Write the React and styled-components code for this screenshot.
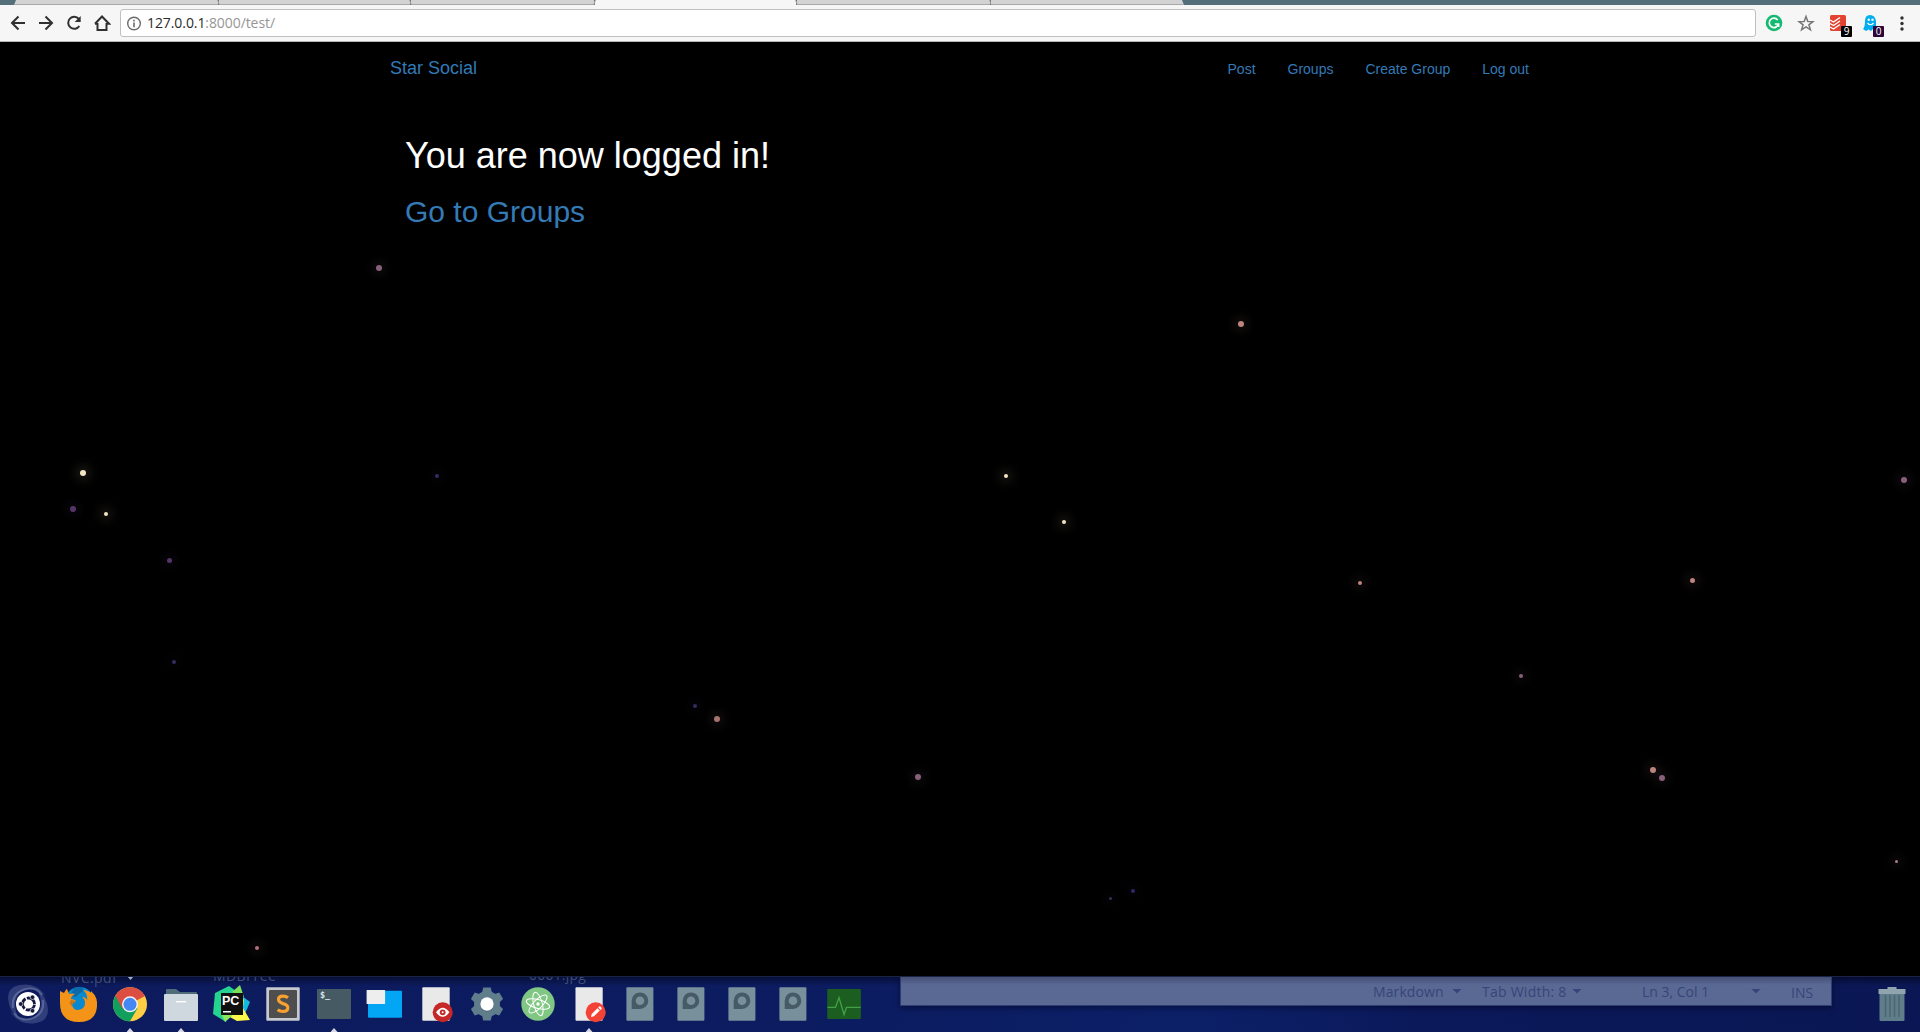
import React from "react";
import styled, { createGlobalStyle, css } from "styled-components";

const Global = createGlobalStyle`
  * { box-sizing: border-box; }
  html, body { margin: 0; background: #000; overflow: hidden; }
`;

const Screen = styled.div`
  width: 1920px;
  height: 1032px;
  display: flex;
  flex-direction: column;
  overflow: hidden;
  font-family: "Liberation Sans", Arial, sans-serif;
`;

/* ---------- browser chrome ---------- */

const TabStrip = styled.div`
  display: flex;
  height: 5px;
  padding-left: 14px;
  background: #546e7a;
  flex: none;
`;

const Tab = styled.div`
  width: ${(p) => p.$w}px;
  height: 5px;
  background: ${(p) => (p.$active ? "#f6f6f6" : "#d3d3d3")};
  border-bottom: 1px solid ${(p) => (p.$active ? "#f6f6f6" : "#a8a8a8")};
  ${(p) => p.$first && css`clip-path: polygon(2px 0, 100% 0, 100% 100%, 0 100%);`}
  ${(p) => p.$last && css`clip-path: polygon(0 0, calc(100% - 2px) 0, 100% 100%, 0 100%);`}
`;

const TabEdge = styled.div`
  width: 1px;
  height: 5px;
  background: #a8a8a8;
  transform: skewX(${(p) => (p.$left ? -22 : 22)}deg);
`;

const Toolbar = styled.div`
  display: flex;
  align-items: center;
  height: 37px;
  flex: none;
  background: #f6f6f6;
  border-bottom: 1px solid #b6b6b6;
  padding-left: 9px;
`;

const NavButtons = styled.div`
  display: flex;
  flex: none;
  gap: 10px;
  width: 111px;
`;

const Omnibox = styled.div`
  display: flex;
  flex: none;
  align-items: center;
  width: 1636px;
  height: 28px;
  padding-left: 6px;
  gap: 5px;
  background: #fff;
  border: 1px solid #bfbfbf;
  border-radius: 3px;
`;

const Url = styled.span`
  font: 14px/18px "Open Sans", "Noto Sans", sans-serif;
  letter-spacing: -0.08px;
  color: #969696;
`;

const Host = styled.span`
  color: #2b2b2b;
`;

const Extensions = styled.div`
  display: flex;
  flex: none;
  align-items: center;
  margin-left: 8px;
`;

const ExtIcon = styled.div`
  position: relative;
  width: ${(p) => p.$w}px;
  height: 20px;
  display: flex;
  justify-content: center;
`;

const Badge = styled.span`
  position: absolute;
  left: ${(p) => p.$x}px;
  top: 13px;
  width: 11px;
  height: 11px;
  border-radius: 1px;
  background: ${(p) => p.$bg};
  color: #fff;
  font: 10px/11px "Open Sans", sans-serif;
  text-align: center;
`;

/* ---------- page ---------- */

const Page = styled.main`
  position: relative;
  flex: 1;
  background: #000;
`;

const Container = styled.div`
  width: 1170px;
  margin: 0 auto;
  padding: 0 15px;
`;

const Navbar = styled.nav`
  display: flex;
  justify-content: space-between;
  height: 52px;
  padding-top: 1px;
`;

const Brand = styled.a`
  padding: 15px 0;
  font-size: 18px;
  line-height: 20px;
  color: #337ab7;
`;

const Links = styled.div`
  display: flex;
  gap: 32px;
  padding: 16px 1px 0 0;
`;

const NavLink = styled.a`
  font-size: 14px;
  line-height: 20px;
  color: #337ab7;
`;

const Content = styled.section`
  padding: 42px 15px 0;
`;

const Title = styled.h1`
  margin: 0 0 19px;
  font-size: 36px;
  line-height: 40px;
  font-weight: 400;
  color: #fff;
`;

const SubTitle = styled.h2`
  margin: 0;
  font-size: 30px;
  line-height: 33px;
  font-weight: 400;
  color: #337ab7;
`;

const Star = styled.i`
  position: absolute;
  left: ${(p) => p.$x - p.$d / 2}px;
  top: ${(p) => p.$y - 42 - p.$d / 2}px;
  width: ${(p) => p.$d}px;
  height: ${(p) => p.$d}px;
  border-radius: 50%;
  background: ${(p) => p.$c};
  box-shadow: 0 0 12px 3px ${(p) => p.$c}30;
`;

/* ---------- dock ---------- */

const Dock = styled.footer`
  position: relative;
  display: flex;
  height: 56px;
  flex: none;
  padding-left: 2.5px;
  overflow: hidden;
  border-top: 1px solid #1a2344;
  background:
    linear-gradient(rgba(0, 0, 10, 0.45), rgba(0, 0, 10, 0) 9px),
    linear-gradient(90deg, #0d1b5e 0%, #0c1c60 45%, #0c2068 62%, #0b195a 74%, #0a1754 100%);
`;

const DesktopLabel = styled.span`
  position: absolute;
  left: ${(p) => p.$x}px;
  top: ${(p) => p.$y}px;
  font: 14px/18px "Open Sans", sans-serif;
  letter-spacing: ${(p) => p.$ls || 0}px;
  color: #3f4d78;
  white-space: nowrap;
`;

const LabelMark = styled.i`
  position: absolute;
  left: 127px;
  top: -1px;
  width: 7px;
  height: 4px;
  background: #a9afc2;
  clip-path: polygon(0 0, 100% 0, 50% 100%);
`;

const Launcher = styled.div`
  position: relative;
  display: grid;
  grid-template-columns: repeat(17, 51px);
  width: 897.5px;
  height: 55px;
`;

const Slot = styled.div`
  display: flex;
  flex-direction: column;
  align-items: center;
  justify-content: space-between;
  padding-top: 7px;
`;

const Running = styled.i`
  width: 7px;
  height: 4px;
  background: #d6d9e2;
  clip-path: polygon(50% 0, 100% 100%, 0 100%);
`;

const StatusBar = styled.div`
  display: flex;
  align-items: center;
  width: 932px;
  height: 29px;
  padding-left: 472px;
  background: linear-gradient(#454f75, #5a6994 8px);
  border: 1px solid #2c3d70;
  border-top: 0;
  box-shadow: 0 2px 6px rgba(0, 0, 30, 0.5);
  color: #354578;
`;

const Status = styled.span`
  width: ${(p) => p.$w}px;
  padding-top: ${(p) => p.$drop || 2}px;
  font: 14px/18px "Open Sans", sans-serif;
  letter-spacing: ${(p) => p.$ls || 0}px;
  white-space: nowrap;
`;

const Caret = styled.i`
  width: 10px;
  height: 5px;
  margin: 0 ${(p) => p.$after}px 0 0;
  background: #354578;
  clip-path: polygon(0 0, 100% 0, 50% 100%);
`;

const Trash = styled.div`
  margin: 9px 0 0 46px;
`;

/* ---------- drawings ---------- */

const Icon = styled.svg`
  display: block;
  flex: none;
`;

const Glyph = ({ children }) => (
  <Icon width="18" height="18" viewBox="0 0 18 18" fill="none" stroke="#303030" strokeWidth="2">
    {children}
  </Icon>
);

const App40 = ({ children }) => (
  <Icon width="40" height="40" viewBox="0 0 40 40">{children}</Icon>
);

const UbuntuIcon = () => (
  <App40>
    <path d="M0 14Q0 3 12 1q17-3 26 12Q30 4 20 5 8 7 7 20q0 8 4 14Q1 28 0 14z" fill="#7282b2" opacity=".35" />
    <path d="M40 26q0 11-12 13Q11 42 2 27q8 9 18 8 12-2 13-15 0-8-4-14 10 6 11 20z" fill="#7282b2" opacity=".35" />
    <path d="M5 24Q3 9 18 5q10-2 16 6M35 16q2 15-13 19-10 2-16-6" fill="none" stroke="#b9c3dc" strokeWidth="2" opacity=".3" />
    <circle cx="20" cy="20" r="12" fill="#fff" />
    <circle cx="20.500" cy="20" r="6" fill="none" stroke="#14193f" strokeWidth="2.800" strokeDasharray="11.200 1.360" strokeDashoffset="-.7" />
    <g fill="#14193f" stroke="#fff" strokeWidth=".6">
      <circle cx="12.700" cy="20" r="2.300" /><circle cx="24.500" cy="13.200" r="2.300" /><circle cx="24.500" cy="26.800" r="2.300" />
    </g>
  </App40>
);

const FirefoxIcon = () => (
  <App40>
    <circle cx="20.500" cy="18" r="15" fill="#0788cf" />
    <path d="M15 4q5-2 9 0 1 4-3 5l-4 4-6-1z" fill="#0a6ba8" />
    <path d="M1 7l4 2q2-4 3-4l2 5q4-1 6 0-4 2-4 5 3 0 5 2-4 1-4 4 1 5 6 5 7-1 7-7 0-4-3-6 4 0 5 3 1-6-4-10 13 1 14 16-1 16-18 16Q1 38 1 19z" fill="#f39318" />
    <path d="M12 16q3 0 5 2-4 1-4 4-4-2-1-6z" fill="#c97713" />
    <path d="M32 7q8 7 5.500 17-2-7-5.500-10z" fill="#f39318" />
  </App40>
);

const ChromeIcon = () => (
  <App40>
    <circle cx="20" cy="20.300" r="17" fill="#ffce44" />
    <path d="M20 20.300L5.300 11.800A17 17 0 0 0 20 37.300l7.500-13z" fill="#109f5c" />
    <path d="M20 20.300L5.300 11.800A17 17 0 0 1 34.900 12H20z" fill="#dc4e41" />
    <path d="M5.300 11.800l7.200 12.800L20 20l15-8H20z" fill="#dc4e41" />
    <circle cx="20" cy="20.300" r="8" fill="#f1f1f1" />
    <circle cx="20" cy="20.300" r="6.500" fill="#4587f3" />
  </App40>
);

const FilesIcon = () => (
  <App40>
    <path d="M5 6q0-1 1-1h9l4 3h16q1 0 1 1v8H5z" fill="#4f6c78" />
    <rect x="3" y="10" width="34" height="27" rx="1" fill="#cfd8de" />
    <rect x="15" y="17" width="10" height="1.400" fill="#fff" />
  </App40>
);

const PyCharmIcon = () => (
  <App40>
    <path d="M3 9l14-7 7 5-9 25-1 6L1 30z" fill="#25d391" />
    <path d="M20 8l8-7 4 12z" fill="#7ddf55" />
    <path d="M30 12l8 6-6 14-8-4z" fill="#13b8e0" />
    <path d="M32 14l-1 10 7 12-13 1-9-5 10-6z" fill="#fcf84a" />
    <path d="M10 31l9-2 1 3-7 6z" fill="#8ce85c" />
    <rect x="9" y="9" width="22" height="22" fill="#101010" />
    <text x="10" y="21" fontFamily="Liberation Sans" fontWeight="700" fontSize="12.500" fill="#fff">PC</text>
    <rect x="11" y="27" width="8" height="1.500" fill="#fff" />
  </App40>
);

const SublimeIcon = () => (
  <App40>
    <rect x="3.300" y="3.300" width="33.400" height="33.400" rx="1" fill="#c6c9cd" />
    <rect x="6" y="6" width="28" height="28" rx="1" fill="#4e4e4e" />
    <path d="M25 13.700q-2-1.500-5-1.500-4.500 0-4.500 3.400 0 2.700 4.500 4 4.800 1.200 4.800 4.200 0 3.700-4.800 3.700-3.200 0-5.400-1.700" fill="none" stroke="#f8a030" strokeWidth="3.200" />
  </App40>
);

const TerminalIcon = () => (
  <App40>
    <rect x="3" y="5" width="34" height="30" rx="1" fill="#465a64" />
    <text x="6" y="14" fontFamily="DejaVu Sans Mono" fontWeight="700" fontSize="8.500" fill="#dce3e6">$_</text>
  </App40>
);

const WindowsIcon = () => (
  <App40>
    <rect x="3" y="6.700" width="34" height="27" rx="1" fill="#03a5f5" />
    <rect x="1.600" y="6" width="18.500" height="14" rx=".5" fill="#eee" />
  </App40>
);

const ViewerIcon = () => (
  <App40>
    <rect x="6.300" y="3.300" width="27.400" height="33.500" rx="1" fill="#e9e9ea" />
    <circle cx="26.700" cy="28.300" r="10" fill="#c62828" />
    <path d="M20 28.300q6.700-9 13.400 0-6.700 9-13.400 0z" fill="#fff" />
    <circle cx="26.700" cy="28.300" r="2.900" fill="#c62828" />
    <circle cx="26.700" cy="28.300" r="1" fill="#fff" />
  </App40>
);

const GearIcon = () => (
  <App40>
    <g fill="#607d8b">
      <circle cx="20" cy="20" r="13" />
      {[0, 60, 120, 180, 240, 300].map((a) => (
        <path key={a} d="M15 9l1.200-5.400h7.600L25 9z" transform={`rotate(${a} 20 20)`} />
      ))}
    </g>
    <circle cx="20" cy="20.600" r="7" fill="#3f5661" opacity=".6" />
    <circle cx="20" cy="20" r="6.700" fill="#fff" />
  </App40>
);

const AtomIcon = () => (
  <App40>
    <circle cx="20" cy="20" r="16.700" fill="#81c784" />
    <g fill="none" stroke="#fff" strokeWidth="1">
      {[15, 75, 135].map((a) => (
        <ellipse key={a} cx="20" cy="20" rx="12" ry="4.300" transform={`rotate(${a} 20 20)`} />
      ))}
    </g>
    <circle cx="20" cy="20" r="1.700" fill="#fff" />
  </App40>
);

const EditorIcon = () => (
  <App40>
    <rect x="6.500" y="3.300" width="27.200" height="33.500" rx="1" fill="#e9e9ea" />
    <circle cx="26.700" cy="28.200" r="10" fill="#f44336" />
    <path d="M22 33l.7-3 5.800-5.800 2.300 2.300L25 32.300zM29.200 23.500l1-1q.6-.4 1.200.1l1.100 1.100q.5.600 0 1.200l-1 1z" fill="#fff" />
  </App40>
);

const DiscussIcon = () => (
  <App40>
    <rect x="6.400" y="3.300" width="27" height="33.500" rx="1" fill="#78909c" />
    <path d="M11.700 25V16.700A8.300 8.300 0 1 1 20 25z" fill="#465b65" />
    <circle cx="20" cy="16.700" r="4.300" fill="#78909c" />
  </App40>
);

const MonitorIcon = () => (
  <App40>
    <rect x="3.200" y="5" width="33.700" height="30" rx="1" fill="#1b5e20" />
    <path d="M3.500 23.300h8l3.500-9.800 5 17 2.500-7.200h14.200" fill="none" stroke="#43a047" strokeWidth="1.300" />
  </App40>
);

const dockApps = [
  [UbuntuIcon], [FirefoxIcon], [ChromeIcon, true], [FilesIcon, true], [PyCharmIcon], [SublimeIcon],
  [TerminalIcon, true], [WindowsIcon], [ViewerIcon], [GearIcon], [AtomIcon], [EditorIcon, true],
  [DiscussIcon], [DiscussIcon], [DiscussIcon], [DiscussIcon], [MonitorIcon],
];

const CREAM = "#f3e6c4";
const ROSE = "#bd8480";
const MAUVE = "#87607a";
const PURPLE = "#553569";
const INDIGO = "#352c60";

const stars = [
  [379, 268, 6, MAUVE], [1241, 324, 6, ROSE], [83, 473, 6, CREAM], [73, 509, 6, PURPLE],
  [105.5, 514, 4, CREAM], [169, 560, 5, PURPLE], [173.5, 662, 4, INDIGO], [437, 476, 4, INDIGO],
  [1006, 476, 4, CREAM], [1063.500, 521.500, 4, CREAM], [1904, 480, 6, MAUVE], [1360, 583, 4, ROSE],
  [1692, 580.5, 5, ROSE], [1521, 675.500, 4, MAUVE], [694.5, 705.500, 4, INDIGO], [717, 719, 6, "#a5736f"],
  [918, 777, 6, MAUVE], [1653, 770, 6, ROSE], [1661.500, 778, 6, MAUVE], [1896.5, 861.5, 3, "#a97f88"],
  [1132.500, 890.5, 4, "#33286a"], [1110.500, 898.500, 3, "#38305a"], [257, 948, 4, "#b0707c"],
];

export default function App() {
  return (
    <Screen>
      <Global />
      <TabStrip>
        <Tab $w={204} $first /><TabEdge /><Tab $w={191} /><TabEdge /><Tab $w={183} /><TabEdge $left />
        <Tab $w={201} $active /><TabEdge /><Tab $w={193} /><TabEdge /><Tab $w={193} $last />
      </TabStrip>
      <Toolbar>
        <NavButtons>
          <Glyph><path d="M16 9H3M9.500 2.500L3 9l6.500 6.500" /></Glyph>
          <Glyph><path d="M2 9h13M8.500 2.500L15 9l-6.500 6.500" /></Glyph>
          <Glyph><path d="M14.300 12A6 6 0 1 1 13.800 5" /><path d="M15.700 2v6h-6z" fill="#303030" stroke="none" /></Glyph>
          <Glyph><path d="M4.500 9v7h9V9M2 9.700L9 2.500l7 7.200h-2.500M2 9.700h2.500" /></Glyph>
        </NavButtons>
        <Omnibox>
          <Icon width="15" height="15" viewBox="0 0 15 15" fill="none" stroke="#6b6b6b">
            <circle cx="7" cy="7.500" r="6.300" strokeWidth="1.400" />
            <path d="M7 6.500v4.700M7 3.700v1.700" strokeWidth="1.600" />
          </Icon>
          <Url><Host>127.0.0.1</Host>:8000/test/</Url>
        </Omnibox>
        <Extensions>
          <ExtIcon $w={20}>
            <Icon width="18" height="20" viewBox="0 0 18 20">
              <circle cx="9" cy="10" r="8.300" fill="#15b971" />
              <path d="M12.700 7A4.700 4.700 0 1 0 13.500 11H9.800M13.600 10.500v3.500" fill="none" stroke="#fff" strokeWidth="1.700" />
            </Icon>
          </ExtIcon>
          <ExtIcon $w={44}>
            <Icon width="18" height="20" viewBox="0 0 18 20">
              <path d="M9 3.500l1.800 5 5.200.1-4.100 3.200 1.500 5L9 13.800l-4.400 3 1.500-5L2 8.600l5.200-.1z" fill="none" stroke="#777" strokeWidth="1.500" />
            </Icon>
          </ExtIcon>
          <ExtIcon $w={20}>
            <Icon width="16" height="20" viewBox="0 0 16 20">
              <rect y="2" width="16" height="16" rx="1.500" fill="#e44332" />
              <path d="M0 7l3.500 2L10 4.500M0 10.500l3.500 2L10 8M0 14l3.500 2L10 11.500" fill="none" stroke="#fff" strokeWidth="1.400" />
            </Icon>
            <Badge $bg="#000" $x={13}>9</Badge>
          </ExtIcon>
          <ExtIcon $w={44}>
            <Icon width="16" height="20" viewBox="0 0 16 20">
              <path d="M3 8q0-6 5-6t6 6v9l-3-1-2 2-2.500-1.500L4 18l-3-2q2-2 2-8z" fill="#00aef0" />
              <circle cx="6.700" cy="6.700" r="1.200" fill="#fff" /><circle cx="10.500" cy="6.700" r="1.200" fill="#fff" />
              <path d="M5.500 10q3 3.500 6 0" fill="none" stroke="#fff" strokeWidth="1.200" />
            </Icon>
            <Badge $bg="#2c0638" $x={25}>0</Badge>
          </ExtIcon>
          <ExtIcon $w={20}>
            <Icon width="6" height="20" viewBox="0 0 6 20" fill="#303030">
              <circle cx="3" cy="5" r="1.700" /><circle cx="3" cy="10.500" r="1.700" /><circle cx="3" cy="16" r="1.700" />
            </Icon>
          </ExtIcon>
        </Extensions>
      </Toolbar>

      <Page>
        {stars.map(([x, y, d, c]) => <Star key={`${x}-${y}`} $x={x} $y={y} $d={d} $c={c} />)}
        <Container>
          <Navbar>
            <Brand>Star Social</Brand>
            <Links>
              <NavLink>Post</NavLink><NavLink>Groups</NavLink><NavLink>Create Group</NavLink><NavLink>Log out</NavLink>
            </Links>
          </Navbar>
          <Content>
            <Title>You are now logged in!</Title>
            <SubTitle>Go to Groups</SubTitle>
          </Content>
        </Container>
      </Page>

      <Dock>
        <DesktopLabel $x={61} $y={-8} $ls={0.4}>NVC.pdf</DesktopLabel>
        <LabelMark />
        <DesktopLabel $x={213} $y={-10} $ls={0.4}>MDBFree</DesktopLabel>
        <DesktopLabel $x={529} $y={-11} $ls={0.2}>0001.jpg</DesktopLabel>
        <Launcher>
          {dockApps.map(([Drawing, running], i) => (
            <Slot key={i}><Drawing />{running && <Running />}</Slot>
          ))}
        </Launcher>
        <StatusBar>
          <Status $w={79} $ls={0.1}>Markdown</Status><Caret $after={20} />
          <Status $w={90} $ls={0.25}>Tab Width: 8</Status><Caret $after={60} />
          <Status $w={109}>Ln 3, Col 1</Status><Caret $after={30} />
          <Status $w={30} $drop={4}>INS</Status>
        </StatusBar>
        <Trash>
          <Icon width="28" height="36" viewBox="0 0 28 36">
            <rect x="9.500" y="1" width="9" height="3" fill="#90a4ae" />
            <rect x="1.500" y="7" width="25" height="28" rx="1" fill="#607d8b" />
            <path d="M7.500 9v22M12 9v22M16.500 9v22M21 9v22" stroke="#4c6572" strokeWidth="1.500" />
            <rect x=".5" y="3" width="27" height="5" rx=".5" fill="#90a4ae" />
          </Icon>
        </Trash>
      </Dock>
    </Screen>
  );
}
